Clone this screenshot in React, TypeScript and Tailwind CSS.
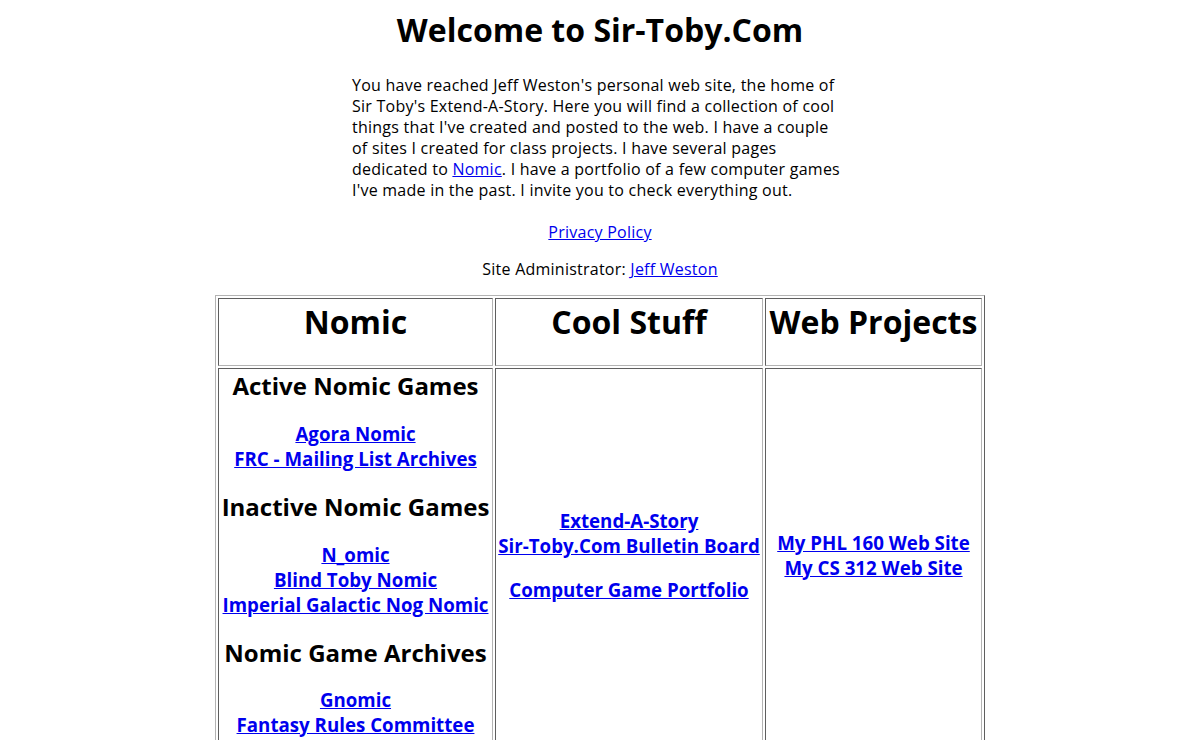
import React from 'react';

const linkCls = 'text-[#0000ee] underline';

const cellCls =
  'border border-t-[#5f5f5f] border-l-[#5f5f5f] border-b-[#b4b4b4] border-r-[#b4b4b4] p-px text-center align-middle';

function LinkGroup({ links }: { links: string[] }) {
  return (
    <h3 className="text-[18.72px] leading-[25px] font-bold">
      {links.map((l, i) => (
        <React.Fragment key={l}>
          <a href="#" className={linkCls}>
            {l}
          </a>
          {i < links.length - 1 && <br />}
        </React.Fragment>
      ))}
    </h3>
  );
}

export default function App() {
  return (
    <div className="bg-white text-black font-['Open_Sans',sans-serif] min-h-[740px] pb-8">
      <h1 className="pt-[9px] text-center text-[32px] leading-[42px] font-bold">Welcome to Sir-Toby.Com</h1>

      <p className="mx-auto mt-[24px] w-[496px] text-[16px] leading-[21px] tracking-[0.015em] whitespace-nowrap">
        You have reached Jeff Weston's personal web site, the home of
        <br />
        Sir Toby's Extend-A-Story. Here you will find a collection of cool
        <br />
        things that I've created and posted to the web. I have a couple
        <br />
        of sites I created for class projects. I have several pages
        <br />
        dedicated to{' '}
        <a href="#" className={linkCls}>
          Nomic
        </a>
        . I have a portfolio of a few computer games
        <br />
        I've made in the past. I invite you to check everything out.
      </p>

      <p className="mt-[21px] text-center text-[16px] leading-[21px] tracking-[0.015em]">
        <a href="#" className={linkCls}>
          Privacy Policy
        </a>
      </p>

      <p className="mt-[16px] text-center text-[16px] leading-[21px] tracking-[0.015em]">
        Site Administrator:{' '}
        <a href="#" className={linkCls}>
          Jeff Weston
        </a>
      </p>

      <table className="mx-auto mt-[15px] w-[770px] table-fixed border-separate border-spacing-[2px] border border-t-[#b4b4b4] border-l-[#b4b4b4] border-b-[#5f5f5f] border-r-[#5f5f5f]">
        <colgroup>
          <col className="w-[275px]" />
          <col className="w-[268px]" />
          <col className="w-[217px]" />
        </colgroup>
        <tbody>
          <tr>
            {['Nomic', 'Cool Stuff', 'Web Projects'].map((t) => (
              <td key={t} className={cellCls}>
                <h1 className="pt-px pb-[21px] text-[32px] leading-[42px] font-bold whitespace-nowrap">{t}</h1>
              </td>
            ))}
          </tr>
          <tr>
            <td className={`${cellCls} pb-[4px]`}>
              <h2 className="text-[24px] leading-[32px] font-bold whitespace-nowrap">Active Nomic Games</h2>
              <div className="mt-[18.5px] whitespace-nowrap">
                <LinkGroup links={['Agora Nomic', 'FRC - Mailing List Archives']} />
              </div>
              <h2 className="mt-[20.5px] text-[24px] leading-[32px] font-bold whitespace-nowrap">Inactive Nomic Games</h2>
              <div className="mt-[18.5px] whitespace-nowrap">
                <LinkGroup links={['N_omic', 'Blind Toby Nomic', 'Imperial Galactic Nog Nomic']} />
              </div>
              <h2 className="mt-[20.5px] text-[24px] leading-[32px] font-bold whitespace-nowrap">Nomic Game Archives</h2>
              <div className="mt-[17.5px] whitespace-nowrap">
                <LinkGroup links={['Gnomic', 'Fantasy Rules Committee']} />
              </div>
            </td>
            <td className={cellCls}>
              <div className="whitespace-nowrap">
                <LinkGroup links={['Extend-A-Story', 'Sir-Toby.Com Bulletin Board']} />
              </div>
              <div className="mt-[18.72px] whitespace-nowrap">
                <LinkGroup links={['Computer Game Portfolio']} />
              </div>
            </td>
            <td className={cellCls}>
              <div className="whitespace-nowrap">
                <LinkGroup links={['My PHL 160 Web Site', 'My CS 312 Web Site']} />
              </div>
            </td>
          </tr>
        </tbody>
      </table>
    </div>
  );
}
